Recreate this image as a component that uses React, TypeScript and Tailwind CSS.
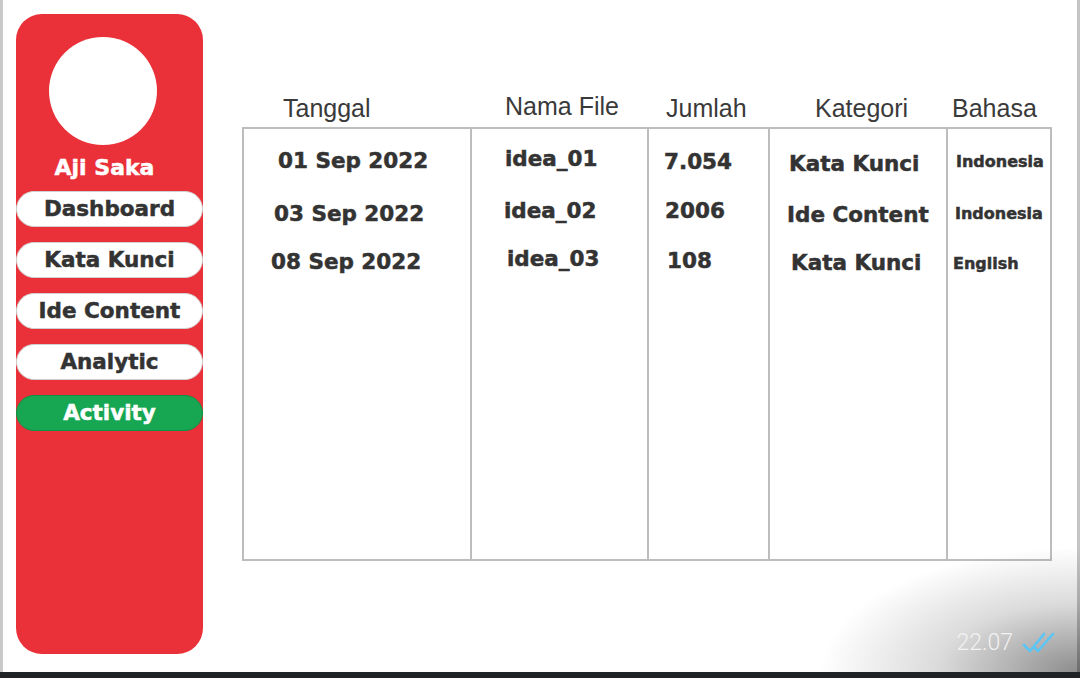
const bold = { fontFamily: '"DejaVu Sans", "Liberation Sans", sans-serif' };

type Cell = { text: string; cls: string };

const menu = [
  { label: "Dashboard", active: false },
  { label: "Kata Kunci", active: false },
  { label: "Ide Content", active: false },
  { label: "Analytic", active: false },
  { label: "Activity", active: true },
];

const headers = [
  { label: "Tanggal", cls: "w-[228px] pl-[41px]" },
  { label: "Nama File", cls: "w-[177px] pl-[35px] -mt-[2px]" },
  { label: "Jumlah", cls: "w-[121px] pl-[19px]" },
  { label: "Kategori", cls: "w-[178px] pl-[47px]" },
  { label: "Bahasa", cls: "w-[106px] pl-[6px]" },
];

const columns: { cls: string; small?: boolean; cells: Cell[] }[] = [
  {
    cls: "w-[226px]",
    cells: [
      { text: "01 Sep 2022", cls: "ml-[34px] mt-[19px]" },
      { text: "03 Sep 2022", cls: "ml-[30px] mt-[27px]" },
      { text: "08 Sep 2022", cls: "ml-[27px] mt-[22px]" },
    ],
  },
  {
    cls: "w-[177px] border-l-2 border-[#bdbdbd]",
    cells: [
      { text: "idea_01", cls: "ml-[33px] mt-[17px]" },
      { text: "idea_02", cls: "ml-[32px] mt-[26px]" },
      { text: "idea_03", cls: "ml-[35px] mt-[22px]" },
    ],
  },
  {
    cls: "w-[121px] border-l-2 border-[#bdbdbd]",
    cells: [
      { text: "7.054", cls: "ml-[15px] mt-[20px]" },
      { text: "2006", cls: "ml-[16px] mt-[23px]" },
      { text: "108", cls: "ml-[18px] mt-[24px]" },
    ],
  },
  {
    cls: "w-[178px] border-l-2 border-[#bdbdbd]",
    cells: [
      { text: "Kata Kunci", cls: "ml-[19px] mt-[22px]" },
      { text: "Ide Content", cls: "ml-[17px] mt-[25px]" },
      { text: "Kata Kunci", cls: "ml-[21px] mt-[22px]" },
    ],
  },
  {
    cls: "flex-1 border-l-2 border-[#bdbdbd]",
    small: true,
    cells: [
      { text: "Indonesia", cls: "ml-[8px] mt-[23px]" },
      { text: "Indonesia", cls: "ml-[7px] mt-[32px]" },
      { text: "English", cls: "ml-[5px] mt-[30px]" },
    ],
  },
];

const Sidebar = () => (
  <aside className="w-[187px] h-[640px] shrink-0 rounded-[26px] bg-[#ea3038] flex flex-col">
    <div className="ml-[33px] mt-[23px] w-[108px] h-[108px] rounded-full bg-white" />
    <div
      className="mt-[10px] text-center text-white font-bold text-[22px] leading-[26px] pr-[10px] [-webkit-text-stroke:0.5px]"
      style={bold}
    >
      Aji Saka
    </div>
    <nav className="mt-[10px] flex flex-col gap-[15px]">
      {menu.map((item) => (
        <div
          key={item.label}
          className={`h-[36px] rounded-full flex items-center justify-center font-bold text-[21.5px] border [-webkit-text-stroke:0.5px] ${
            item.active
              ? "bg-[#17a652] text-white border-[#129045]"
              : "bg-white text-[#333333] border-[#d0d0d0]"
          }`}
          style={bold}
        >
          {item.label}
        </div>
      ))}
    </nav>
  </aside>
);

const ActivityTable = () => (
  <section className="ml-[39px] mt-[80px] flex flex-col">
    <div className="flex h-[28px]">
      {headers.map((h) => (
        <div
          key={h.label}
          className={`${h.cls} text-[25px] leading-[28px] text-[#3a3a3a] whitespace-nowrap`}
          style={{ fontFamily: '"Liberation Sans", Arial, sans-serif' }}
        >
          {h.label}
        </div>
      ))}
    </div>
    <div className="mt-[5px] w-[810px] h-[434px] border-2 border-[#bdbdbd] flex">
      {columns.map((col, i) => (
        <div key={i} className={`${col.cls} flex flex-col`}>
          {col.cells.map((c, j) => (
            <div
              key={j}
              className={`${c.cls} font-bold text-[#333333] whitespace-nowrap [-webkit-text-stroke:0.5px] ${
                col.small ? "text-[16px] leading-[20px]" : "text-[21.5px] leading-[26px]"
              }`}
              style={bold}
            >
              {c.text}
            </div>
          ))}
        </div>
      ))}
    </div>
  </section>
);

export default function App() {
  return (
    <div className="w-[1080px] h-[678px] bg-white relative overflow-hidden flex flex-col">
      <main className="h-[672px] flex border-l-[3px] border-r-[3px] border-l-[#c9c9c9] border-r-[#c4c4c4] pl-[13px] pt-[14px]">
        <Sidebar />
        <ActivityTable />
      </main>
      <div className="h-[6px] bg-[#202325]" />

      <div className="absolute right-0 bottom-[6px] w-[280px] h-[130px] bg-[radial-gradient(260px_125px_at_100%_100%,rgba(0,0,0,0.45),rgba(0,0,0,0.14)_55%,transparent)] pointer-events-none" />
      <div className="absolute right-[22px] bottom-[22px] flex items-center gap-[9px]">
        <span
          className="text-[23px] leading-[26px] text-[#f2f2f2] font-light"
          style={{ fontFamily: "Roboto, sans-serif" }}
        >
          22.07
        </span>
        <svg width="36" height="24" viewBox="0 0 36 24" fill="none">
          <path d="M2 14 L8 20 L22 3" stroke="#5bc6f5" strokeWidth="2.6" strokeLinecap="round" strokeLinejoin="round" />
          <path d="M13 17 L16 20 L31 3" stroke="#5bc6f5" strokeWidth="2.6" strokeLinecap="round" strokeLinejoin="round" />
        </svg>
      </div>
    </div>
  );
}
